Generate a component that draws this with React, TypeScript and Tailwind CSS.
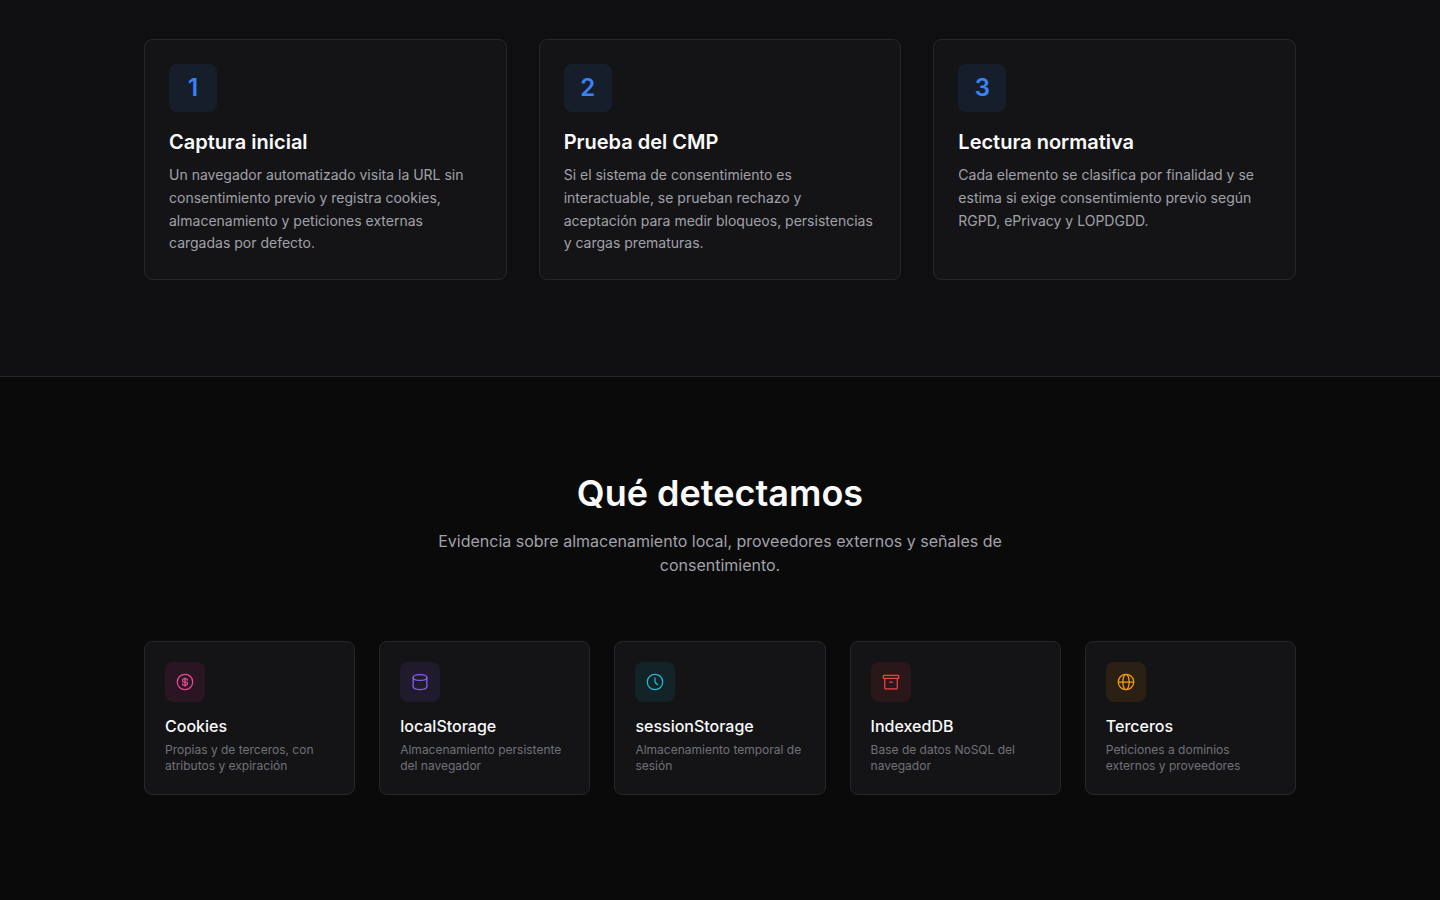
import type { ReactNode } from "react";

interface Step {
  title: string;
  text: string;
}

interface Detection {
  title: string;
  text: string;
  icon: ReactNode;
  tone: string;
}

const steps: Step[] = [
  {
    title: "Captura inicial",
    text: "Un navegador automatizado visita la URL sin consentimiento previo y registra cookies, almacenamiento y peticiones externas cargadas por defecto.",
  },
  {
    title: "Prueba del CMP",
    text: "Si el sistema de consentimiento es interactuable, se prueban rechazo y aceptación para medir bloqueos, persistencias y cargas prematuras.",
  },
  {
    title: "Lectura normativa",
    text: "Cada elemento se clasifica por finalidad y se estima si exige consentimiento previo según RGPD, ePrivacy y LOPDGDD.",
  },
];

const detections: Detection[] = [
  {
    title: "Cookies",
    text: "Propias y de terceros, con atributos y expiración",
    icon: (
      <>
        <circle cx="12" cy="12" r="9.25" />
        <path d="M15 9.75c0-.9-.8-1.5-1.75-1.5h-2.4a1.87 1.87 0 0 0 0 3.75h2.3a1.87 1.87 0 0 1 0 3.75h-2.4c-.95 0-1.75-.6-1.75-1.5M12 7v10" />
      </>
    ),
    tone: "bg-[#2a1622] text-[#ec4899]",
  },
  {
    title: "localStorage",
    text: "Almacenamiento persistente del navegador",
    icon: (
      <>
        <ellipse cx="12" cy="6.5" rx="8.25" ry="3.5" />
        <path d="M3.75 6.5v11c0 1.93 3.7 3.5 8.25 3.5s8.25-1.57 8.25-3.5v-11" />
      </>
    ),
    tone: "bg-[#1f1a2c] text-[#8b5cf6]",
  },
  {
    title: "sessionStorage",
    text: "Almacenamiento temporal de sesión",
    icon: (
      <>
        <circle cx="12" cy="12" r="9.25" />
        <path d="M12 7v5.25l3 3" />
      </>
    ),
    tone: "bg-[#122427] text-[#22b8d4]",
  },
  {
    title: "IndexedDB",
    text: "Base de datos NoSQL del navegador",
    icon: (
      <>
        <rect x="2.75" y="4" width="18.5" height="3.75" rx="0.75" />
        <path d="M4.5 7.75v11.5a1 1 0 0 0 1 1h13a1 1 0 0 0 1-1V7.75M10.25 12h3.5" />
      </>
    ),
    tone: "bg-[#2a1719] text-[#ef4444]",
  },
  {
    title: "Terceros",
    text: "Peticiones a dominios externos y proveedores",
    icon: (
      <>
        <circle cx="12" cy="12" r="9.25" />
        <ellipse cx="12" cy="12" rx="3.75" ry="9.25" />
        <path d="M2.75 12h18.5" />
      </>
    ),
    tone: "bg-[#2b2014] text-[#f59e0b]",
  },
];

function StepCard({ step, number }: { step: Step; number: number }) {
  return (
    <li className="rounded-lg border border-[#27272a] bg-[#141416] p-6">
      <div className="mb-4 flex size-12 items-center justify-center rounded-lg bg-[#161e2c] text-2xl font-semibold text-[#3b82f6]">
        {number}
      </div>
      <h3 className="mb-2 text-xl font-semibold text-[#fafafa]">{step.title}</h3>
      <p className="text-sm leading-relaxed text-[#a1a1aa]">{step.text}</p>
    </li>
  );
}

function DetectionCard({ item }: { item: Detection }) {
  return (
    <li className="rounded-lg border border-[#27272a] bg-[#141416] p-5">
      <div className={`mb-3 flex size-10 items-center justify-center rounded-lg ${item.tone}`}>
        <svg
          className="size-5"
          viewBox="0 0 24 24"
          fill="none"
          stroke="currentColor"
          strokeWidth="1.5"
          strokeLinecap="round"
          strokeLinejoin="round"
          aria-hidden="true"
        >
          {item.icon}
        </svg>
      </div>
      <h3 className="mb-1 text-base font-medium text-[#fafafa]">{item.title}</h3>
      <p className="text-xs text-[#71717a]">{item.text}</p>
    </li>
  );
}

export default function App() {
  return (
    <main className="min-h-screen bg-[#0a0a0a] font-['Inter',sans-serif] antialiased">
      <section className="border-b border-[#27272a] bg-[#0f0f11] px-6 pt-[39px] pb-24">
        <ol className="mx-auto grid max-w-6xl gap-8 md:grid-cols-3">
          {steps.map((step, index) => (
            <StepCard key={step.title} step={step} number={index + 1} />
          ))}
        </ol>
      </section>
      <section className="px-6 pt-24 pb-24">
        <div className="mx-auto max-w-6xl">
          <header className="mb-16 text-center">
            <h2 className="mb-4 text-4xl font-semibold text-[#fafafa]">Qué detectamos</h2>
            <p className="mx-auto max-w-xl text-base text-[#a1a1aa]">
              Evidencia sobre almacenamiento local, proveedores externos y señales de consentimiento.
            </p>
          </header>
          <ul className="grid gap-6 sm:grid-cols-2 lg:grid-cols-5">
            {detections.map((item) => (
              <DetectionCard key={item.title} item={item} />
            ))}
          </ul>
        </div>
      </section>
    </main>
  );
}
